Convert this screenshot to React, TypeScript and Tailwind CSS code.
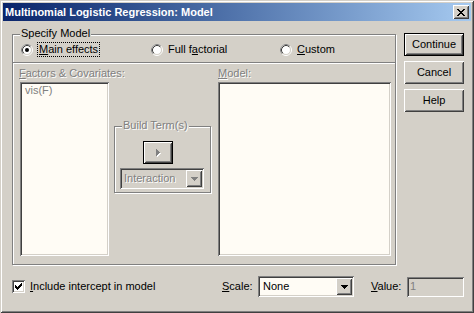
import React from 'react';

const sunken =
  'shadow-[inset_1px_1px_0_#808080,inset_-1px_-1px_0_#ffffff,inset_2px_2px_0_#404040,inset_-2px_-2px_0_#d4d0c8]';
const raised =
  'shadow-[inset_1px_1px_0_#ffffff,inset_-1px_-1px_0_#404040,inset_2px_2px_0_#d4d0c8,inset_-2px_-2px_0_#808080]';
const etched = 'border border-[#808080] shadow-[1px_1px_0_#ffffff,inset_1px_1px_0_#ffffff]';
const disabledText = 'text-[#808080] [text-shadow:1px_1px_0_#ffffff]';

function Radio({ checked }: { checked?: boolean }) {
  return (
    <svg width="12" height="12" viewBox="0 0 12 12" className="shrink-0">
      <circle cx="6" cy="6" r="5.5" fill="none" stroke="#ffffff" />
      <path d="M2.11 9.89 A5.5 5.5 0 0 1 9.89 2.11" fill="none" stroke="#808080" />
      <circle cx="6" cy="6" r="4.5" fill="#ffffff" stroke="#d4d0c8" />
      <path d="M2.82 9.18 A4.5 4.5 0 0 1 9.18 2.82" fill="none" stroke="#404040" />
      {checked && <circle cx="6" cy="6" r="2" fill="#000000" />}
    </svg>
  );
}

function DownArrow({ color = '#000000' }: { color?: string }) {
  return (
    <svg width="7" height="4" viewBox="0 0 7 4" shapeRendering="crispEdges">
      <rect x="0" y="0" width="7" height="1" fill={color} />
      <rect x="1" y="1" width="5" height="1" fill={color} />
      <rect x="2" y="2" width="3" height="1" fill={color} />
      <rect x="3" y="3" width="1" height="1" fill={color} />
    </svg>
  );
}

function DropButton({ disabled }: { disabled?: boolean }) {
  return (
    <div className={`w-[16px] h-[17px] bg-[#d4d0c8] flex items-center justify-center ${raised}`}>
      <DownArrow color={disabled ? '#808080' : '#000000'} />
    </div>
  );
}

function Button({ label, isDefault }: { label: string; isDefault?: boolean }) {
  return (
    <div className={`w-[60px] h-[23px] ${isDefault ? 'border border-black' : ''}`}>
      <div className={`w-full h-full flex items-center justify-center bg-[#d4d0c8] ${raised}`}>{label}</div>
    </div>
  );
}

export default function App() {
  return (
    <div className="w-[474px] h-[313px] bg-[#d4d0c8] p-[3px] flex flex-col font-['Liberation_Sans',Arial,sans-serif] text-[11px] leading-[13px] text-black whitespace-nowrap shadow-[inset_1px_1px_0_#d4d0c8,inset_-1px_-1px_0_#404040,inset_2px_2px_0_#ffffff,inset_-2px_-2px_0_#808080]">
      {/* Title bar */}
      <div className="h-[18px] flex items-center justify-between pl-[2px] pr-[2px] bg-linear-to-r from-[#0a246a] to-[#a6caf0]">
        <span className="font-bold text-white">Multinomial Logistic Regression: Model</span>
        <div className={`w-[16px] h-[14px] bg-[#d4d0c8] flex items-center justify-center ${raised}`}>
          <svg width="8" height="7" viewBox="0 0 8 7" shapeRendering="crispEdges">
            <rect x="0" y="0" width="2" height="1" fill="#000" />
            <rect x="6" y="0" width="2" height="1" fill="#000" />
            <rect x="1" y="1" width="2" height="1" fill="#000" />
            <rect x="5" y="1" width="2" height="1" fill="#000" />
            <rect x="2" y="2" width="4" height="1" fill="#000" />
            <rect x="3" y="3" width="2" height="1" fill="#000" />
            <rect x="2" y="4" width="4" height="1" fill="#000" />
            <rect x="1" y="5" width="2" height="1" fill="#000" />
            <rect x="5" y="5" width="2" height="1" fill="#000" />
            <rect x="0" y="6" width="2" height="1" fill="#000" />
            <rect x="6" y="6" width="2" height="1" fill="#000" />
          </svg>
        </div>
      </div>

      {/* Main row */}
      <div className="flex items-start">
        {/* Specify Model group */}
        <div className={`relative ml-[9px] mt-[13px] w-[384px] h-[231px] ${etched}`}>
          <span className="absolute left-[7px] top-[-8px] px-[1px] bg-[#d4d0c8]">Specify Model</span>

          <div className="mt-[7px] h-[15px] flex items-center pl-[8px]">
            <div className="w-[130px] flex items-center">
              <Radio checked />
              <span className="ml-[4px] px-[1px] border border-dotted border-black">
                <u>M</u>ain effects
              </span>
            </div>
            <div className="w-[129px] flex items-center">
              <Radio />
              <span className="ml-[5px]">
                Full f<u>a</u>ctorial
              </span>
            </div>
            <div className="flex items-center">
              <Radio />
              <span className="ml-[5px]">
                <u>C</u>ustom
              </span>
            </div>
          </div>

          <div className="mt-[5px] h-[2px] border-t border-[#808080] border-b border-b-white" />

          <div className="flex mt-[3px]">
            <div className="ml-[7px] w-[89px]">
              <div className={`h-[13px] -ml-[1px] -mr-[20px] ${disabledText}`}>
                <u>F</u>actors &amp; Covariates:
              </div>
              <div className={`mt-[2px] h-[174px] bg-[#fffcf5] p-[2px] ${sunken}`}>
                <div className="pl-[3px] text-[#808080]">vis(F)</div>
              </div>
            </div>

            <div className="w-[109px]">
              <div className={`relative ml-[5px] mt-[59px] w-[97px] h-[67px] ${etched}`}>
                <span className={`absolute left-[7px] top-[-8px] px-[1px] bg-[#d4d0c8] ${disabledText}`}>
                  Build Term(s)
                </span>
                <div className="ml-[28px] mt-[14px] w-[30px] h-[23px] border border-black">
                  <div className={`w-full h-full flex items-center justify-center bg-[#d4d0c8] ${raised}`}>
                    <svg width="5" height="8" viewBox="0 0 5 8" shapeRendering="crispEdges">
                      <rect x="1" y="1" width="1" height="7" fill="#ffffff" />
                      <rect x="2" y="2" width="1" height="5" fill="#ffffff" />
                      <rect x="3" y="3" width="1" height="3" fill="#ffffff" />
                      <rect x="4" y="4" width="1" height="1" fill="#ffffff" />
                      <rect x="0" y="0" width="1" height="7" fill="#808080" />
                      <rect x="1" y="1" width="1" height="5" fill="#808080" />
                      <rect x="2" y="2" width="1" height="3" fill="#808080" />
                      <rect x="3" y="3" width="1" height="1" fill="#808080" />
                    </svg>
                  </div>
                </div>
                <div className={`ml-[5px] mt-[4px] w-[84px] h-[21px] flex items-center p-[2px] bg-[#d4d0c8] ${sunken}`}>
                  <span className={`flex-1 pl-[2px] ${disabledText}`}>Interaction</span>
                  <DropButton disabled />
                </div>
              </div>
            </div>

            <div className="w-[173px]">
              <div className={`h-[13px] ${disabledText}`}>
                <u>M</u>odel:
              </div>
              <div className={`mt-[2px] h-[174px] bg-[#fffcf5] ${sunken}`} />
            </div>
          </div>
        </div>

        {/* Buttons */}
        <div className="ml-[8px] mt-[12px] flex flex-col gap-[5px]">
          <Button label="Continue" isDefault />
          <Button label="Cancel" />
          <Button label="Help" />
        </div>
      </div>

      {/* Bottom row */}
      <div className="mt-[11px] h-[21px] flex items-center">
        <div className="ml-[9px] w-[210px] flex items-center">
          <div className={`w-[13px] h-[13px] bg-white flex items-center justify-center ${sunken}`}>
            <svg width="7" height="7" viewBox="0 0 7 7" shapeRendering="crispEdges">
              <rect x="6" y="0" width="1" height="1" fill="#000" />
              <rect x="5" y="1" width="2" height="1" fill="#000" />
              <rect x="0" y="2" width="1" height="1" fill="#000" />
              <rect x="4" y="2" width="3" height="1" fill="#000" />
              <rect x="0" y="3" width="2" height="1" fill="#000" />
              <rect x="3" y="3" width="3" height="1" fill="#000" />
              <rect x="0" y="4" width="5" height="1" fill="#000" />
              <rect x="1" y="5" width="3" height="1" fill="#000" />
              <rect x="2" y="6" width="1" height="1" fill="#000" />
            </svg>
          </div>
          <span className="ml-[5px]">
            <u>I</u>nclude intercept in model
          </span>
        </div>
        <div className="w-[36px]">
          <u>S</u>cale:
        </div>
        <div className={`w-[96px] h-[21px] flex items-center p-[2px] bg-[#fffcf5] ${sunken}`}>
          <span className="flex-1 pl-[3px]">None</span>
          <DropButton />
        </div>
        <div className="ml-[17px] w-[36px]">
          <u>V</u>alue:
        </div>
        <div className={`w-[57px] h-[20px] flex items-center p-[2px] bg-[#d4d0c8] ${sunken}`}>
          <span className="pl-[1px] text-[#808080]">1</span>
        </div>
      </div>
    </div>
  );
}
